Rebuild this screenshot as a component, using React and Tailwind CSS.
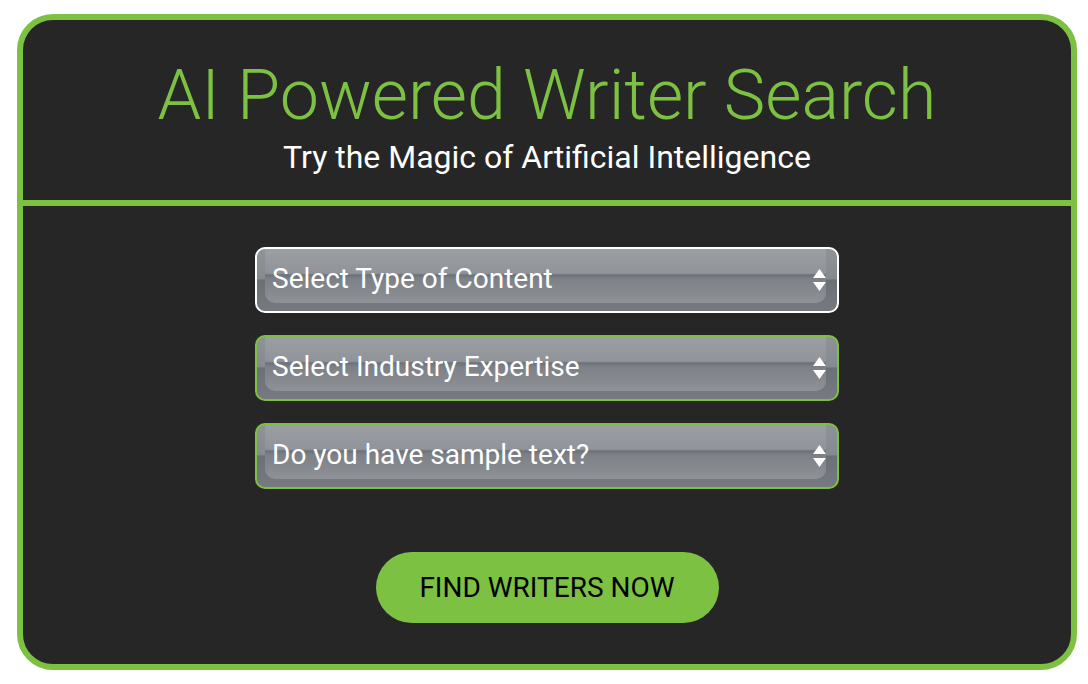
import React from "react";

const fields = [
  { label: "Select Type of Content", border: "border-white" },
  { label: "Select Industry Expertise", border: "border-[#7dc142]" },
  { label: "Do you have sample text?", border: "border-[#7dc142]" },
];

function FakeSelect({ label, border }) {
  return (
    <div
      className={`relative w-[584px] h-[66px] rounded-[10px] border-2 ${border} overflow-hidden flex bg-[linear-gradient(180deg,#8f9398_0%,#858a90_48%,#6b7077_50%,#767a80_100%)]`}
    >
      <div className="flex-1 ml-[8px] mr-[11px] mb-[8px] rounded-b-[10px] flex items-center pl-[7px] bg-[linear-gradient(180deg,#9b9ea2_0%,#90949a_45%,#6c7178_48%,#7d8187_55%,#8e9297_100%)]">
        <span className="text-white text-[28px] leading-none mt-[5px]">{label}</span>
      </div>
      <div className="absolute right-[11px] top-[20px] flex flex-col gap-[4px]">
        <svg width="13" height="9" viewBox="0 0 13 9">
          <polygon points="6.5,0 13,9 0,9" fill="#fff" />
        </svg>
        <svg width="13" height="9" viewBox="0 0 13 9">
          <polygon points="0,0 13,0 6.5,9" fill="#fff" />
        </svg>
      </div>
    </div>
  );
}

export default function App() {
  return (
    <div className="w-[1088px] h-[684px] bg-white pt-[14px] pl-[17px] font-['Roboto',sans-serif]">
      <div className="w-[1060px] h-[656px] border-[6px] border-[#7dc142] rounded-[36px] bg-[#262626] flex flex-col overflow-hidden">
        <div className="h-[180px] flex flex-col items-center pt-[40px]">
          <h1 className="text-[70px] leading-none font-light text-[#7dc142]">
            AI Powered Writer Search
          </h1>
          <p className="mt-[11px] text-[32px] leading-none text-white">
            Try the Magic of Artificial Intelligence
          </p>
        </div>
        <div className="h-[6px] bg-[#7dc142]" />
        <div className="flex flex-col items-center pt-[41px]">
          <div className="flex flex-col gap-[22px]">
            {fields.map((f) => (
              <FakeSelect key={f.label} label={f.label} border={f.border} />
            ))}
          </div>
          <button className="mt-[63px] w-[343px] h-[71px] rounded-full bg-[#7dc142] text-black text-[28px] leading-none">
            FIND WRITERS NOW
          </button>
        </div>
      </div>
    </div>
  );
}
